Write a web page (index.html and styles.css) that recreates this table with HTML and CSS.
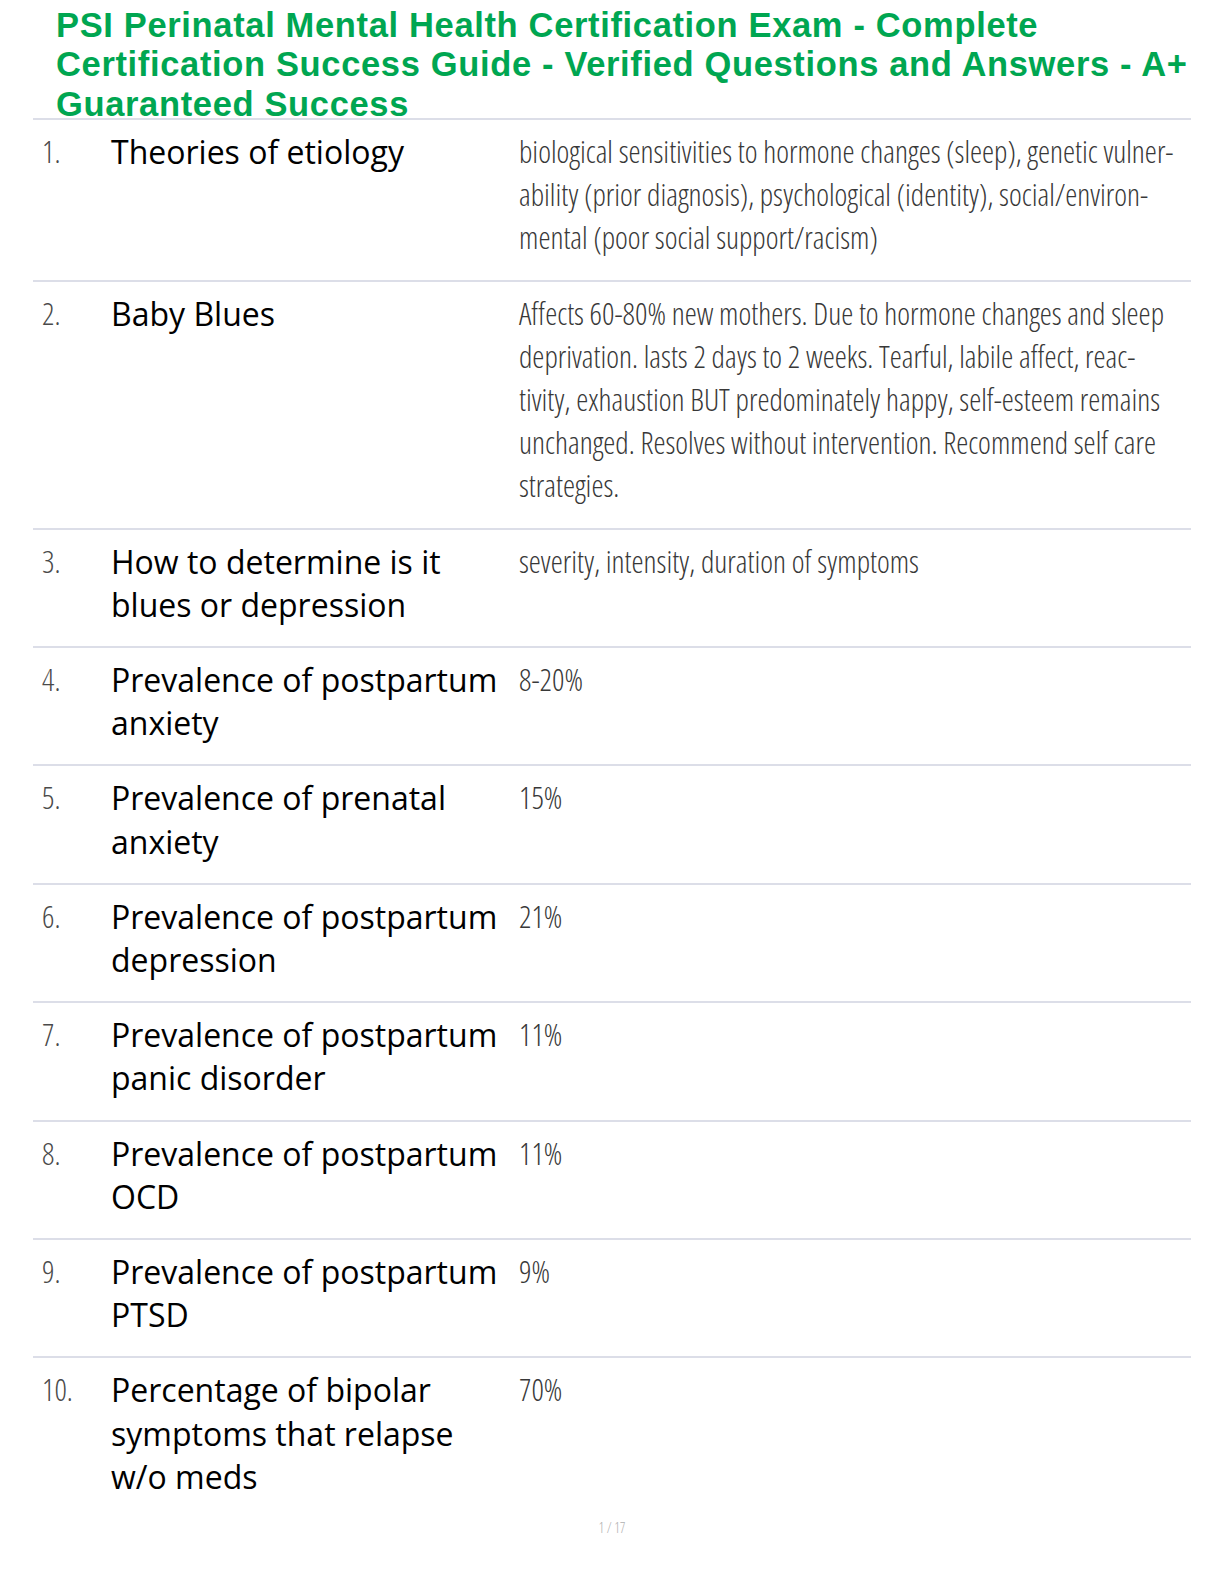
FILE: index.html
```html
<!DOCTYPE html>
<html lang="en">
<head>
<meta charset="utf-8">
<title>PSI Perinatal Mental Health Certification Exam</title>
<link rel="stylesheet" href="styles.css">
</head>
<body>
<div class="page">
  <h1 class="title">PSI Perinatal Mental Health Certification Exam - Complete<br>Certification Success Guide - Verified Questions and Answers - A+<br>Guaranteed Success</h1>
  <div class="rows">
    <div class="row">
      <div class="num">1.</div>
      <div class="q">Theories of etiology</div>
      <div class="a">biological sensitivities to hormone changes (sleep), genetic vulner-<br>ability (prior diagnosis), psychological (identity), social/environ-<br>mental (poor social support/racism)</div>
    </div>
    <div class="row">
      <div class="num">2.</div>
      <div class="q">Baby Blues</div>
      <div class="a">Affects 60-80% new mothers. Due to hormone changes and sleep<br>deprivation. lasts 2 days to 2 weeks. Tearful, labile affect, reac-<br>tivity, exhaustion BUT predominately happy, self-esteem remains<br>unchanged. Resolves without intervention. Recommend self care<br>strategies.</div>
    </div>
    <div class="row">
      <div class="num">3.</div>
      <div class="q">How to determine is it<br>blues or depression</div>
      <div class="a">severity, intensity, duration of symptoms</div>
    </div>
    <div class="row">
      <div class="num">4.</div>
      <div class="q">Prevalence of postpartum<br>anxiety</div>
      <div class="a">8-20%</div>
    </div>
    <div class="row">
      <div class="num">5.</div>
      <div class="q">Prevalence of prenatal<br>anxiety</div>
      <div class="a">15%</div>
    </div>
    <div class="row">
      <div class="num">6.</div>
      <div class="q">Prevalence of postpartum<br>depression</div>
      <div class="a">21%</div>
    </div>
    <div class="row">
      <div class="num">7.</div>
      <div class="q">Prevalence of postpartum<br>panic disorder</div>
      <div class="a">11%</div>
    </div>
    <div class="row">
      <div class="num">8.</div>
      <div class="q">Prevalence of postpartum<br>OCD</div>
      <div class="a">11%</div>
    </div>
    <div class="row">
      <div class="num">9.</div>
      <div class="q">Prevalence of postpartum<br>PTSD</div>
      <div class="a">9%</div>
    </div>
    <div class="row last">
      <div class="num">10.</div>
      <div class="q">Percentage of bipolar<br>symptoms that relapse<br>w/o meds</div>
      <div class="a">70%</div>
    </div>
  </div>
  <div class="pager">1 / 17</div>
</div>
</body>
</html>
```

FILE: styles.css
```css
html, body {
  margin: 0;
  padding: 0;
  background: #ffffff;
}

.page {
  width: 1158px;
  margin-left: 33px;
}

.title {
  margin: 0;
  padding: 5.5px 0 0 23px;
  font-family: "Liberation Sans", Arial, sans-serif;
  font-weight: 700;
  font-size: 34.5px;
  letter-spacing: 0.65px;
  line-height: 39.5px;
  white-space: nowrap;
  color: #00a651;
  border-bottom: 2px solid #dcdee8;
  height: 120px;
  box-sizing: border-box;
  overflow: visible;
}

.rows {
  display: flex;
  flex-direction: column;
}

.row {
  display: grid;
  grid-template-columns: 78px 408px 1fr;
  padding: 10px 0 20px 0;
  border-bottom: 2px solid #dcdee8;
}

.row.last {
  border-bottom: none;
}

.num,
.a {
  font-family: "Open Sans", sans-serif;
  font-weight: 300;
  font-stretch: 75%;
  font-size: 30.5px;
  line-height: 43.2px;
  color: #383838;
}

.num {
  padding-left: 9px;
  color: #4a4a4a;
}

.q {
  font-family: "Open Sans", sans-serif;
  font-weight: 400;
  font-size: 32px;
  line-height: 43.2px;
  color: #000000;
}

.pager {
  margin-top: 0;
  text-align: center;
  font-family: "Open Sans", sans-serif;
  font-weight: 300;
  font-stretch: 75%;
  font-size: 14px;
  line-height: 20px;
  color: #b0b0b0;
}
```
